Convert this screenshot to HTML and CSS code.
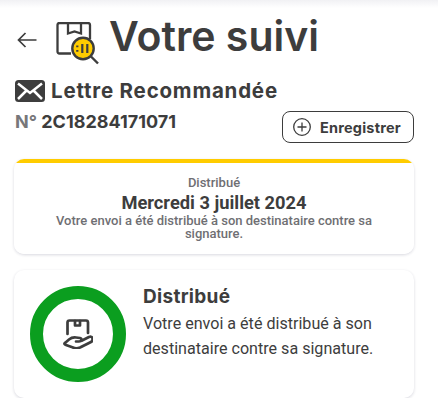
FILE: index.html
```html
<!DOCTYPE html>
<html lang="fr">
<head>
    <meta charset="UTF-8">
    <meta name="viewport" content="width=device-width, initial-scale=1.0">
    <title>Votre suivi</title>
    <link rel="stylesheet" href="styles.css">
</head>
<body>
    <div class="top-shade"></div>
    <header class="page-header">
        <a class="back-link" href="#" aria-label="Retour">
            <svg width="20" height="16" viewBox="0 0 20 16" fill="none" stroke="#3d3d3d" stroke-width="1.7">
                <path d="M19.500 8H1.500M8.500 1L1.500 8l7 7"/>
            </svg>
        </a>
        <svg class="track-icon" width="44" height="43" viewBox="0 0 44 43" fill="none">
            <path d="M15 31.500H3.500Q1.500 31.500 1.500 29.500V3Q1.500 1 3.500 1H32Q34 1 34 3V17" stroke="#3d3d3d" stroke-width="2.300"/>
            <path d="M12 1V11.500L18.500 9.500 25 11.500V1" stroke="#3d3d3d" stroke-width="2.300"/>
            <circle cx="27" cy="26.500" r="10.700" fill="#ffcc00" stroke="#3d3d3d" stroke-width="2.400"/>
            <path d="M21.300 23.500v1.800M21.300 28v1.800M26.300 22v9M31.300 22v9" stroke="#3d3d3d" stroke-width="2.200"/>
            <path d="M35 34.500L42 41.500" stroke="#3d3d3d" stroke-width="2.400"/>
        </svg>
        <h1>Votre suivi</h1>
    </header>

    <section class="shipment">
        <div class="shipment-type">
            <svg width="30" height="22" viewBox="0 0 30 22">
                <rect width="30" height="22" rx="3.500" fill="#3d3d3d"/>
                <path d="M3 3.500l12 9.500L27 3.500M3 19l8.500-8.500M27 19l-8.500-8.500" fill="none" stroke="#fff" stroke-width="2.500"/>
            </svg>
            <h2>Lettre Recommandée</h2>
        </div>
        <div class="shipment-row">
            <p class="shipment-number"><span>N°</span> 2C18284171071</p>
            <button class="save-btn" type="button">
                <svg width="18" height="18" viewBox="0 0 18 18" fill="none" stroke="#3d3d3d" stroke-width="1.300">
                    <circle cx="9" cy="9" r="8.300"/>
                    <path d="M9 4.500v9M4.500 9h9"/>
                </svg>
                Enregistrer
            </button>
        </div>
    </section>

    <section class="card status-card">
        <p class="status-label">Distribué</p>
        <p class="status-date">Mercredi 3 juillet 2024</p>
        <p class="status-note">Votre envoi a été distribué à son destinataire contre sa signature.</p>
    </section>

    <section class="card detail-card">
        <div class="ring">
            <svg width="30" height="30" viewBox="0 0 30 30" fill="none" stroke="#3d3d3d" stroke-width="2.700" stroke-linejoin="round" stroke-linecap="round">
                <path d="M4.500 15V3.500Q4.500 1.500 6.500 1.500H23Q25 1.500 25 3.500V14"/>
                <path d="M12 2v4.500h5V2"/>
                <path d="M2 24L6 20.500Q9 18 13 18.500L17 19Q19 19.500 18.500 21 18 22.500 16 22.500H13"/>
                <path d="M19 21.500L26 18Q29 17 29.500 19.500 30 22 28 23L17 28.500Q13 30 10 28.500L3 26Q.5 25 2 24"/>
            </svg>
        </div>
        <div class="detail-text">
            <h3>Distribué</h3>
            <p>Votre envoi a été distribué à son destinataire contre sa signature.</p>
        </div>
    </section>
</body>
</html>
```
FILE: styles.css
```css
* {
    box-sizing: border-box;
    margin: 0;
    padding: 0;
}

body {
    font-family: Roboto, Arial, sans-serif;
    background-color: #fff;
    color: #3d3d3d;
    padding: 0 24px 0 14px;
}

.top-shade {
    height: 8px;
    margin: 0 -24px 0 -14px;
    background: linear-gradient(#f1f1f4, #fff);
}

.page-header {
    display: flex;
    align-items: center;
    height: 56px;
    padding-left: 3px;
}

.back-link {
    display: flex;
    width: 39px;
    margin-top: 8px;
}

.track-icon {
    margin-top: 14px;
    flex-shrink: 0;
}

h1 {
    margin-left: 9px;
    font-family: Inter, sans-serif;
    font-size: 41px;
    font-weight: 600;
    line-height: 56px;
}

.shipment {
    margin-top: 16px;
}

.shipment-type {
    display: flex;
    align-items: center;
    gap: 6px;
    padding-left: 1px;
}

h2 {
    font-family: Inter, sans-serif;
    font-size: 20.500px;
    font-weight: 700;
    line-height: 22px;
    letter-spacing: 0.800px;
}

.shipment-row {
    display: flex;
    justify-content: space-between;
    align-items: flex-start;
    margin-top: 9px;
}

.shipment-number {
    padding: 1px 0 0 1px;
    font-family: Inter, sans-serif;
    font-size: 18px;
    font-weight: 700;
    line-height: 20px;
}

.shipment-number span {
    color: #77777a;
}

.save-btn {
    display: flex;
    align-items: center;
    gap: 9px;
    width: 132px;
    height: 32px;
    padding-left: 10px;
    background-color: #fff;
    border: 1px solid #3d3d3d;
    border-radius: 8px;
    color: #3d3d3d;
    font-family: Inter, sans-serif;
    font-size: 14.500px;
    font-weight: 700;
    letter-spacing: 0.200px;
}

.card {
    background-color: #fff;
    border-radius: 10px;
    box-shadow: 0 1px 3px rgba(40, 40, 80, 0.18);
}

.status-card {
    height: 95px;
    margin-top: 16px;
    padding: 17px 24px 0;
    background: linear-gradient(#ffcc00 4px, #fff 4px);
    text-align: center;
}

.status-label {
    color: #6f6f73;
    font-size: 13px;
    font-weight: 500;
    line-height: 14px;
}

.status-date {
    font-size: 18.300px;
    font-weight: 700;
    line-height: 25px;
}

.status-note {
    color: #6f6f73;
    font-size: 13px;
    font-weight: 500;
    line-height: 12.500px;
}

.detail-card {
    display: flex;
    gap: 17px;
    height: 128px;
    margin-top: 16px;
    padding: 16px;
}

.ring {
    display: flex;
    align-items: center;
    justify-content: center;
    flex-shrink: 0;
    width: 96px;
    height: 96px;
    border: 13px solid #0b9e1f;
    border-radius: 50%;
}

h3 {
    font-family: Inter, sans-serif;
    font-size: 19px;
    font-weight: 700;
    line-height: 22px;
    letter-spacing: 0.300px;
}

.detail-text p {
    margin-top: 4px;
    font-size: 16.100px;
    line-height: 24.500px;
}
```
